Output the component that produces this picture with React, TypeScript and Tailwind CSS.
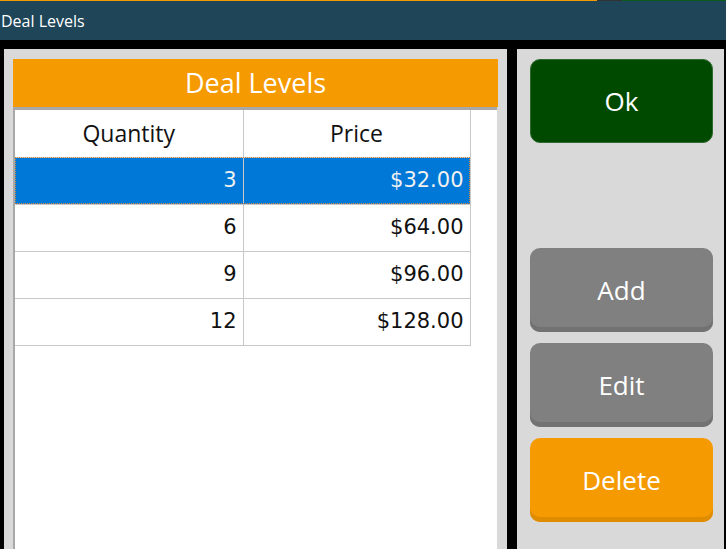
import React from 'react';

const rows = [
  { qty: '3', price: '$32.00' },
  { qty: '6', price: '$64.00' },
  { qty: '9', price: '$96.00' },
  { qty: '12', price: '$128.00' },
];

const uiFont = { fontFamily: '"Open Sans", "Noto Sans", sans-serif' };
const cellFont = { fontFamily: '"DejaVu Sans", "Liberation Sans", sans-serif' };

const SideButton: React.FC<{ label: string; className: string }> = ({ label, className }) => (
  <button
    className={`h-[84px] w-full rounded-[10px] text-white text-[26px] flex items-center justify-center ${className}`}
    style={uiFont}
  >
    {label}
  </button>
);

const App: React.FC = () => {
  return (
    <div className="w-[726px] h-[549px] bg-black overflow-hidden flex flex-col" style={uiFont}>
      {/* strip of the window behind */}
      <div className="h-[1px] flex">
        <div className="w-[597px] bg-[#f59a00]" />
        <div className="w-[25px] bg-[#333]" />
        <div className="flex-1 bg-[#0b5d1e]" />
      </div>

      <div className="h-[39px] bg-[#1e4558] text-white text-[16px] flex items-center pl-[1px]">
        Deal Levels
      </div>

      <div className="flex-1 flex pt-[9px] pl-[4px] pr-[2px] gap-[10px] min-h-0">
        {/* left panel */}
        <div className="w-[503px] bg-[#d9d9d9] pt-[10px] pl-[9px] pr-[10px] flex flex-col">
          <div className="h-[48px] bg-[#f59a00] text-white text-[27px] flex items-center justify-center mr-[-1px]">
            Deal Levels
          </div>
          <div className="flex-1 bg-white border-t-[3px] border-l-[2px] border-[#a8a8a8]">
            <table className="border-collapse w-[455px] table-fixed">
              <colgroup>
                <col className="w-[228px]" />
                <col className="w-[227px]" />
              </colgroup>
              <thead>
                <tr className="h-[47px]">
                  <th className="font-normal text-[23px] text-[#111] border-r border-b border-[#c8c8c8]" style={uiFont}>
                    Quantity
                  </th>
                  <th className="font-normal text-[23px] text-[#111] border-r border-b border-[#c8c8c8]" style={uiFont}>
                    Price
                  </th>
                </tr>
              </thead>
              <tbody>
                {rows.map((r, i) => (
                  <tr
                    key={r.qty}
                    className={`h-[47px] ${i === 0 ? 'bg-[#0078d7] text-[#f0f0f0] outline-1 outline-dotted outline-[#d08a40] -outline-offset-1' : 'text-[#111]'}`}
                  >
                    <td className="text-right pr-[6px] text-[21px] border-r border-b border-[#c8c8c8]" style={cellFont}>
                      {r.qty}
                    </td>
                    <td className="text-right pr-[6px] text-[21px] border-r border-b border-[#c8c8c8]" style={cellFont}>
                      {r.price}
                    </td>
                  </tr>
                ))}
              </tbody>
            </table>
          </div>
        </div>

        {/* right panel */}
        <div className="w-[207px] bg-[#d9d9d9] pt-[10px] pl-[13px] pr-[11px] flex flex-col">
          <SideButton label="Ok" className="bg-[#004a00] border border-[#2f6a2f]" />
          <div className="mt-[105px] flex flex-col gap-[11px]">
            <SideButton label="Add" className="bg-[#808080] shadow-[inset_0_-5px_0_#727272]" />
            <SideButton label="Edit" className="bg-[#808080] shadow-[inset_0_-5px_0_#727272]" />
            <SideButton label="Delete" className="bg-[#f59a00] shadow-[inset_0_-5px_0_#e08c00]" />
          </div>
        </div>
      </div>
    </div>
  );
};

export default App;
